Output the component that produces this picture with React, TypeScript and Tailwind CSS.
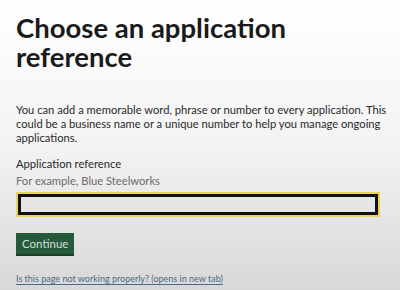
export default function App() {
  return (
    <div className="h-[290px] w-[400px] overflow-hidden bg-gradient-to-b from-[#ffffff] via-[#f3f3f3] to-[#d8d8d8] px-4 pt-[13px] font-['Lato','Liberation_Sans',sans-serif] text-[#1a1a1a]">
      <h1 className="text-[27.5px] font-bold leading-[29px]">
        Choose an application
        <br />
        reference
      </h1>
      <p className="mt-[32px] w-[372px] text-[11.2px] leading-[14px] text-[#2a2a2a]">
        You can add a memorable word, phrase or number to every application. This could be a
        business name or a unique number to help you manage ongoing applications.
      </p>
      <label className="mt-[12px] block text-[11.2px] leading-[14px] text-[#2a2a2a]">
        Application reference
      </label>
      <div className="mt-[3px] text-[11.2px] leading-[14px] text-[#6b6b6b]">
        For example, Blue Steelworks
      </div>
      <div className="mt-[4px] w-[364px] rounded-[1px] bg-[#e9d35a] p-[2px]">
        <input
          className="block h-[21px] w-full border-[3px] border-[#111] bg-[#e6e6e6] outline-none"
          type="text"
        />
      </div>
      <button className="mt-[16px] block h-[23px] border-b-2 border-[#1a3f29] bg-[#255a3b] px-[6px] text-[11.5px] leading-[21px] text-[#d4dfd7]">
        Continue
      </button>
      <a
        href="#"
        className="mt-[16px] block text-[9px] leading-[14px] text-[#4d6a88] underline underline-offset-2"
      >
        Is this page not working properly? (opens in new tab)
      </a>
    </div>
  );
}
